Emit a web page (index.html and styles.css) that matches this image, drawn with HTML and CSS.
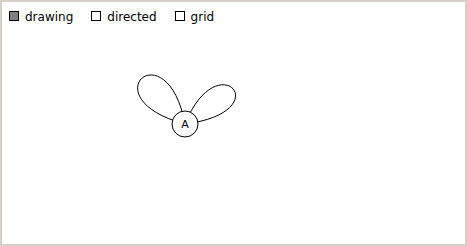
FILE: index.html
```html
<!DOCTYPE html>
<html lang="en">

<head>
	<meta charset="UTF-8">
	<meta name="viewport" content="width=device-width, initial-scale=1.0">
	<title>Graph editor</title>
	<link rel="stylesheet" href="styles.css">
</head>

<body>
	<div class="editor">
		<div class="editor__toolbar">
			<label class="editor__option">
				<input type="checkbox" class="editor__check" checked> drawing
			</label>
			<label class="editor__option">
				<input type="checkbox" class="editor__check"> directed
			</label>
			<label class="editor__option">
				<input type="checkbox" class="editor__check"> grid
			</label>
		</div>
		<svg class="editor__canvas" viewBox="0 0 463 218">
			<g transform="translate(-2,-26)">
				<path class="edge" d="M185,124 C88,98 167,28 185,124"></path>
				<path class="edge" d="M185,124 C218,42 280,112 185,124"></path>
				<circle class="node" cx="185" cy="124" r="13"></circle>
				<text class="node__label" x="185" y="124">A</text>
			</g>
		</svg>
	</div>
</body>

</html>
```

FILE: styles.css
```css
html,
body {
	margin: 0;
	height: 100%;
}

.editor {
	box-sizing: border-box;
	height: 100%;
	border: 2px solid #d4d0c8;
	background: #fff;
	display: flex;
	flex-direction: column;
	font-family: "DejaVu Sans", Verdana, sans-serif;
	font-size: 12px;
	color: #000;
}

.editor__toolbar {
	display: flex;
	align-items: center;
	height: 24px;
	box-sizing: border-box;
	padding: 6px 0 0 7px;
	line-height: 14px;
}

.editor__option {
	display: flex;
	align-items: center;
	gap: 6px;
	margin-right: 18px;
}

.editor__check {
	appearance: none;
	-webkit-appearance: none;
	box-sizing: border-box;
	width: 10px;
	height: 10px;
	margin: 0 0 2px 0;
	border: 1px solid #000;
	background: #fff;
}

.editor__check:checked {
	background: #808080;
}

.editor__canvas {
	flex: 1;
	display: block;
	width: 100%;
}

.edge {
	fill: none;
	stroke: #000;
	stroke-width: 1;
}

.node {
	fill: #fff;
	stroke: #000;
	stroke-width: 1;
}

.node__label {
	font-family: "DejaVu Sans", Verdana, sans-serif;
	font-size: 11px;
	text-anchor: middle;
	dominant-baseline: central;
	fill: #000;
}
```
